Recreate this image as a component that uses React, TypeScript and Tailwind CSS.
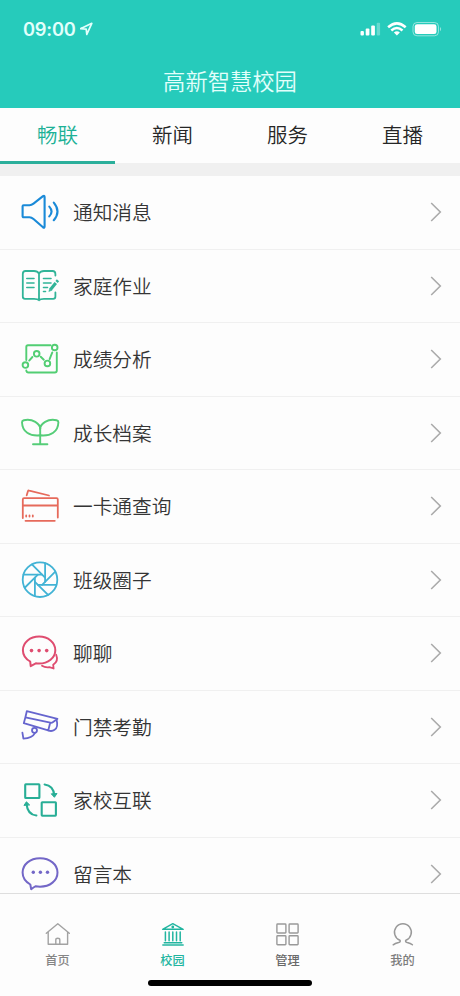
import type { ReactNode } from "react";

const tabs = ["畅联", "新闻", "服务", "直播"];

const blades = [0, 45, 90, 135, 180, 225, 270, 315];

type Item = { label: string; color: string; icon: ReactNode };

const items: Item[] = [
  {
    label: "通知消息",
    color: "text-[#1a8ad8]",
    icon: (
      <g strokeWidth="2.1">
        <path d="M3.6 13.2H9.5Q11.5 13.2 13.5 11.6L23 4.2Q24.6 3.2 24.6 5V34.6Q24.6 36.4 23 35.3L13.5 27Q11.5 25.2 9.5 25.2H3.6Q2.6 25.2 2.6 24.2V14.2Q2.6 13.2 3.6 13.2Z" />
        <path d="M29.3 14.6Q33.8 19.5 29.3 24.4M33.8 10.6Q41.2 19.5 33.8 28.2" />
      </g>
    ),
  },
  {
    label: "家庭作业",
    color: "text-[#31b498]",
    icon: (
      <g strokeWidth="1.8">
        <path d="M19 7.5Q17.5 5 14 5H5.5Q2.8 5 2.8 8V30.5Q2.8 32.8 5 32.8H14Q17.8 32.8 19 34.2Q20.2 32.8 24 32.8H33.2Q35.4 32.8 35.4 30.5V26.5M35.4 9.5V8Q35.4 5 32.5 5H24Q20.5 5 19 7.5V33.5" />
        <path d="M6.8 12.5H14M6.8 17H14M6.8 21.5H14M23.5 12.5H31M23.5 17H31M23.5 21.5H27.5M23.5 25.5H25.5" strokeWidth="1.6" />
        <path d="M30.5 23.4L35.8 17" strokeWidth="3.2" strokeLinecap="butt" />
        <path d="M36.6 15.9L38 14.3" strokeWidth="3" strokeLinecap="butt" />
        <path d="M29.8 22.5L28.8 25.6L31.8 24.3Z" fill="currentColor" strokeWidth=".5" />
      </g>
    ),
  },
  {
    label: "成绩分析",
    color: "text-[#52ce73]",
    icon: (
      <g strokeWidth="1.9">
        <path d="M6.3 21V8Q6.3 6.2 8 6.2H30.5M36.8 13.5V31.5Q36.8 33.5 34.8 33.5H8.5Q6.5 33.5 6.3 31.5" />
        <circle cx="5.4" cy="26.1" r="2.8" />
        <circle cx="16.7" cy="14.8" r="2.8" />
        <circle cx="27.4" cy="24.4" r="2.8" />
        <circle cx="34.7" cy="8.5" r="2.8" />
        <path d="M9.2 21.6L12.4 18M20.7 17.7L23.8 20.7M29.6 20.2L32.3 13.4" />
      </g>
    ),
  },
  {
    label: "成长档案",
    color: "text-[#55cd78]",
    icon: (
      <g strokeWidth="1.9">
        <path d="M20.2 22.3C9.5 23.4 2.3 18.8 2 9.2Q2 7.6 3.8 7.2C12.5 5.2 20.2 10.6 20.2 16M20.2 22.3C30.9 23.4 38.1 18.8 38.4 9.2Q38.4 7.6 36.6 7.2C27.9 5.2 20.2 10.6 20.2 16" />
        <path d="M20.2 15V31.2M13 31.2H27.4" />
      </g>
    ),
  },
  {
    label: "一卡通查询",
    color: "text-[#e66a5b]",
    icon: (
      <g strokeWidth="1.8">
        <path d="M2.8 32V13.5Q2.8 12.2 4 12.2H36.6Q37.8 12.2 37.8 13.5V31.5M2.8 19.5H37.8M5.5 34.8H34.8" />
        <path d="M6.7 9.3L8 5.1Q8.3 4.3 9.2 4.6L29 9.5" />
        <path d="M6.2 29.5V30.5M9.5 29.5V30.5M12.8 29.5V30.5" />
      </g>
    ),
  },
  {
    label: "班级圈子",
    color: "text-[#42b3d5]",
    icon: (
      <g strokeWidth="1.8">
        <circle cx="20" cy="19.7" r="17.3" />
        {blades.map((angle) => (
          <path key={angle} d="M25.1 3.2V21.8" transform={`rotate(${angle} 20 19.7)`} />
        ))}
      </g>
    ),
  },
  {
    label: "聊聊",
    color: "text-[#df4d70]",
    icon: (
      <g strokeWidth="2">
        <path d="M10.7 33.1L10.2 28.5C5.5 25.8 2.9 21.8 2.9 17.2C2.9 9.5 10.1 3.6 19.1 3.6C28.1 3.6 35.3 9.5 35.3 17.2C35.3 24.8 28.1 30.6 19.1 30.6Q17.3 30.6 15.8 30.3Z" />
        <path d="M36.2 21.8Q38.8 28 33.2 31.8L33.6 35.5L29.4 34.2Q25 34.7 22 32.8" strokeWidth="1.8" />
        <g fill="currentColor" stroke="none">
          <circle cx="11.5" cy="17.6" r="1.8" />
          <circle cx="19.1" cy="17.6" r="1.8" />
          <circle cx="26.7" cy="17.6" r="1.8" />
        </g>
      </g>
    ),
  },
  {
    label: "门禁考勤",
    color: "text-[#6665ce]",
    icon: (
      <g strokeWidth="1.8">
        <path d="M6.8 4.2L37.5 11.8L32.8 15.2Q31.8 16 30.3 15.7L5.4 10.3ZM5.4 10.3L3.8 16.2L28.2 23.4L30.2 15.7" />
        <path d="M36.6 12.8Q38.5 20.5 34.6 22.8Q31.8 24.8 28.2 23.4" />
        <circle cx="14.5" cy="23.3" r="2.5" />
        <path d="M14.9 26.2Q12.2 31.4 3.4 31.6L2.4 25.6" />
      </g>
    ),
  },
  {
    label: "家校互联",
    color: "text-[#28ae96]",
    icon: (
      <g strokeWidth="2.1">
        <rect x="5.2" y="4.3" width="14.2" height="13.7" rx=".6" />
        <rect x="21.7" y="22.2" width="14.2" height="13.5" rx=".6" />
        <path d="M24.6 4.5Q33.5 5.6 34.3 15.3M16.4 35.5Q7.5 34.5 6.6 24.3" />
        <path d="M31.5 14.1L34.4 17.3L36.8 13.8ZM4.2 25.1L6.4 21.8L9.4 24.7Z" fill="currentColor" strokeWidth="1" />
      </g>
    ),
  },
  {
    label: "留言本",
    color: "text-[#7367c7]",
    icon: (
      <g strokeWidth="2">
        <path d="M11.2 35.2L10.3 30.5C5.7 27.8 2.6 23.5 2.6 18.5C2.6 10.4 10 4.3 20 4.3C30 4.3 37.5 10.4 37.5 18.5C37.5 26.6 30 32.7 20 32.7L15.8 32.2Q13.5 33.4 11.2 35.2Z" />
        <g fill="currentColor" stroke="none">
          <circle cx="13.3" cy="18.3" r="1.7" />
          <circle cx="20.4" cy="18.3" r="1.7" />
          <circle cx="27.5" cy="18.3" r="1.7" />
        </g>
      </g>
    ),
  },
];

const navItems: Item[] = [
  {
    label: "首页",
    color: "text-[#858585]",
    icon: (
      <g stroke="#a2a2a2" strokeWidth="1.4">
        <path d="M2.3 12.2L13.8 2.8L25.3 12.2M4.2 11V23.3H23.6V11" />
        <path d="M11.8 23V18.8Q11.8 17.2 13.8 17.2Q15.8 17.2 15.8 18.8V23" />
      </g>
    ),
  },
  {
    label: "校园",
    color: "text-[#22b5a0]",
    icon: (
      <g strokeWidth="1.4">
        <path d="M3.6 8.3L13.8 2.7L24.2 8.3ZM5.2 21.8H22.8M3.8 24H24.2" />
        <path d="M6.4 11V19.8M10.1 11V19.8M13.8 11V19.8M17.5 11V19.8M21.2 11V19.8" strokeWidth="1.5" />
        <circle cx="13.8" cy="6" r=".7" />
      </g>
    ),
  },
  {
    label: "管理",
    color: "text-[#696969]",
    icon: (
      <g stroke="#999" strokeWidth="1.4">
        <rect x="2.9" y="3" width="9" height="9" rx=".7" />
        <rect x="15.1" y="3" width="9" height="9" rx=".7" />
        <rect x="2.9" y="14.8" width="9" height="9" rx=".7" />
        <rect x="15.1" y="14.8" width="9" height="9" rx=".7" />
      </g>
    ),
  },
  {
    label: "我的",
    color: "text-[#7c7c7c]",
    icon: (
      <path
        d="M4.2 23.8Q6 22.3 9.6 21.5Q12 20.8 10.9 19.3A8.4 8.6 0 1 1 16.9 19.3Q15.8 20.8 18.2 21.5Q21.7 22.3 23.4 23.8"
        stroke="#999"
        strokeWidth="1.5"
      />
    ),
  },
];

function StatusBar() {
  return (
    <div className="flex h-[58px] items-center justify-between pr-[17px] pl-[23px] text-[#e2fffb]">
      <div className="flex items-center gap-[4px]">
        <span className="font-['Inter',sans-serif] text-[18.3px] leading-none font-semibold tracking-[-0.2px]">09:00</span>
        <svg className="h-[14px] w-[14px]" viewBox="0 0 14 14" fill="none" stroke="currentColor" strokeWidth="1.7" strokeLinejoin="round">
          <path d="M.5 6.7L11.8 1.3L6.8 12.4L6.2 7.2Z" />
        </svg>
      </div>
      <svg className="h-[18px] w-[84px] text-white" viewBox="0 0 84 18" fill="currentColor">
        <rect x="1.5" y="11" width="3.4" height="4.5" rx="1" />
        <rect x="6.7" y="8.5" width="3.7" height="7" rx="1" />
        <rect x="12.2" y="5.5" width="3.7" height="10" rx="1" />
        <rect x="17.7" y="2.7" width="3.4" height="12.8" rx="1" opacity=".3" />
        <g fill="none" stroke="currentColor" strokeWidth="2.5">
          <path d="M29.1 7.3Q37.9 -.5 46.7 7.3" />
          <path d="M32.3 10.5Q37.9 5.6 43.5 10.5" />
        </g>
        <path d="M34.9 12.4Q37.9 10.2 40.9 12.4L37.9 15.5Z" />
        <rect x="54" y="2.5" width="25.5" height="13.3" rx="4" fill="none" stroke="currentColor" opacity=".5" />
        <rect x="55.8" y="4.3" width="21.7" height="9.7" rx="2.3" />
        <path d="M81 7Q83.3 9.1 81 11.3Z" opacity=".5" />
      </svg>
    </div>
  );
}

export default function App() {
  return (
    <div className="flex h-[996px] w-[460px] flex-col overflow-hidden bg-[#fdfdfd] font-['Noto_Sans_CJK_SC',sans-serif]">
      <header className="h-[108px] shrink-0 bg-[#26cbbb]">
        <StatusBar />
        <h1 className="mt-[5px] text-center text-[22.3px] leading-[34px] font-[350] text-[#e2fffb]">高新智慧校园</h1>
      </header>

      <nav className="z-10 grid h-[55px] shrink-0 grid-cols-4">
        {tabs.map((tab, index) => (
          <button
            key={tab}
            className={
              index === 0
                ? "z-10 -mb-px border-b-[3px] border-[#2baf9b] pb-[1px] text-[20.5px] leading-[52px] font-[350] text-[#1cb196]"
                : "border-b-2 border-transparent pb-[1px] text-[20.5px] leading-[52px] font-[350] text-[#262626]"
            }
          >
            {tab}
          </button>
        ))}
      </nav>

      <main className="min-h-0 flex-1 overflow-hidden border-t-[13px] border-[#f0f0f0]">
        {items.map((item) => (
          <div key={item.label} className="flex h-[73.5px] items-center border-b border-[#f0f0f0] pr-[18px] pl-[20px]">
            <svg
              className={`h-10 w-10 shrink-0 ${item.color}`}
              viewBox="0 0 40 40"
              fill="none"
              stroke="currentColor"
              strokeLinecap="round"
              strokeLinejoin="round"
            >
              {item.icon}
            </svg>
            <span className="ml-[13px] flex-1 text-[19.7px] leading-[30px] font-[350] text-[#353535]">{item.label}</span>
            <svg className="h-[20px] w-[12px]" viewBox="0 0 12 20" fill="none" stroke="#ababab" strokeWidth="1.6">
              <path d="M1.2 1L10.3 10L1.2 19" />
            </svg>
          </div>
        ))}
      </main>

      <footer className="flex h-[103px] shrink-0 flex-col items-center border-t border-[#dedede]">
        <div className="grid h-[86px] w-full shrink-0 grid-cols-4 pt-[27px]">
          {navItems.map((item) => (
            <button key={item.label} className={`flex flex-col items-center ${item.color}`}>
              <svg
                className="h-[28px] w-[28px]"
                viewBox="0 0 28 28"
                fill="none"
                stroke="currentColor"
                strokeLinecap="round"
                strokeLinejoin="round"
              >
                {item.icon}
              </svg>
              <span className="mt-[2px] text-[12.2px] leading-[18px] font-medium">{item.label}</span>
            </button>
          ))}
        </div>
        <div className="h-[6px] w-[164px] rounded-full bg-black" />
      </footer>
    </div>
  );
}
